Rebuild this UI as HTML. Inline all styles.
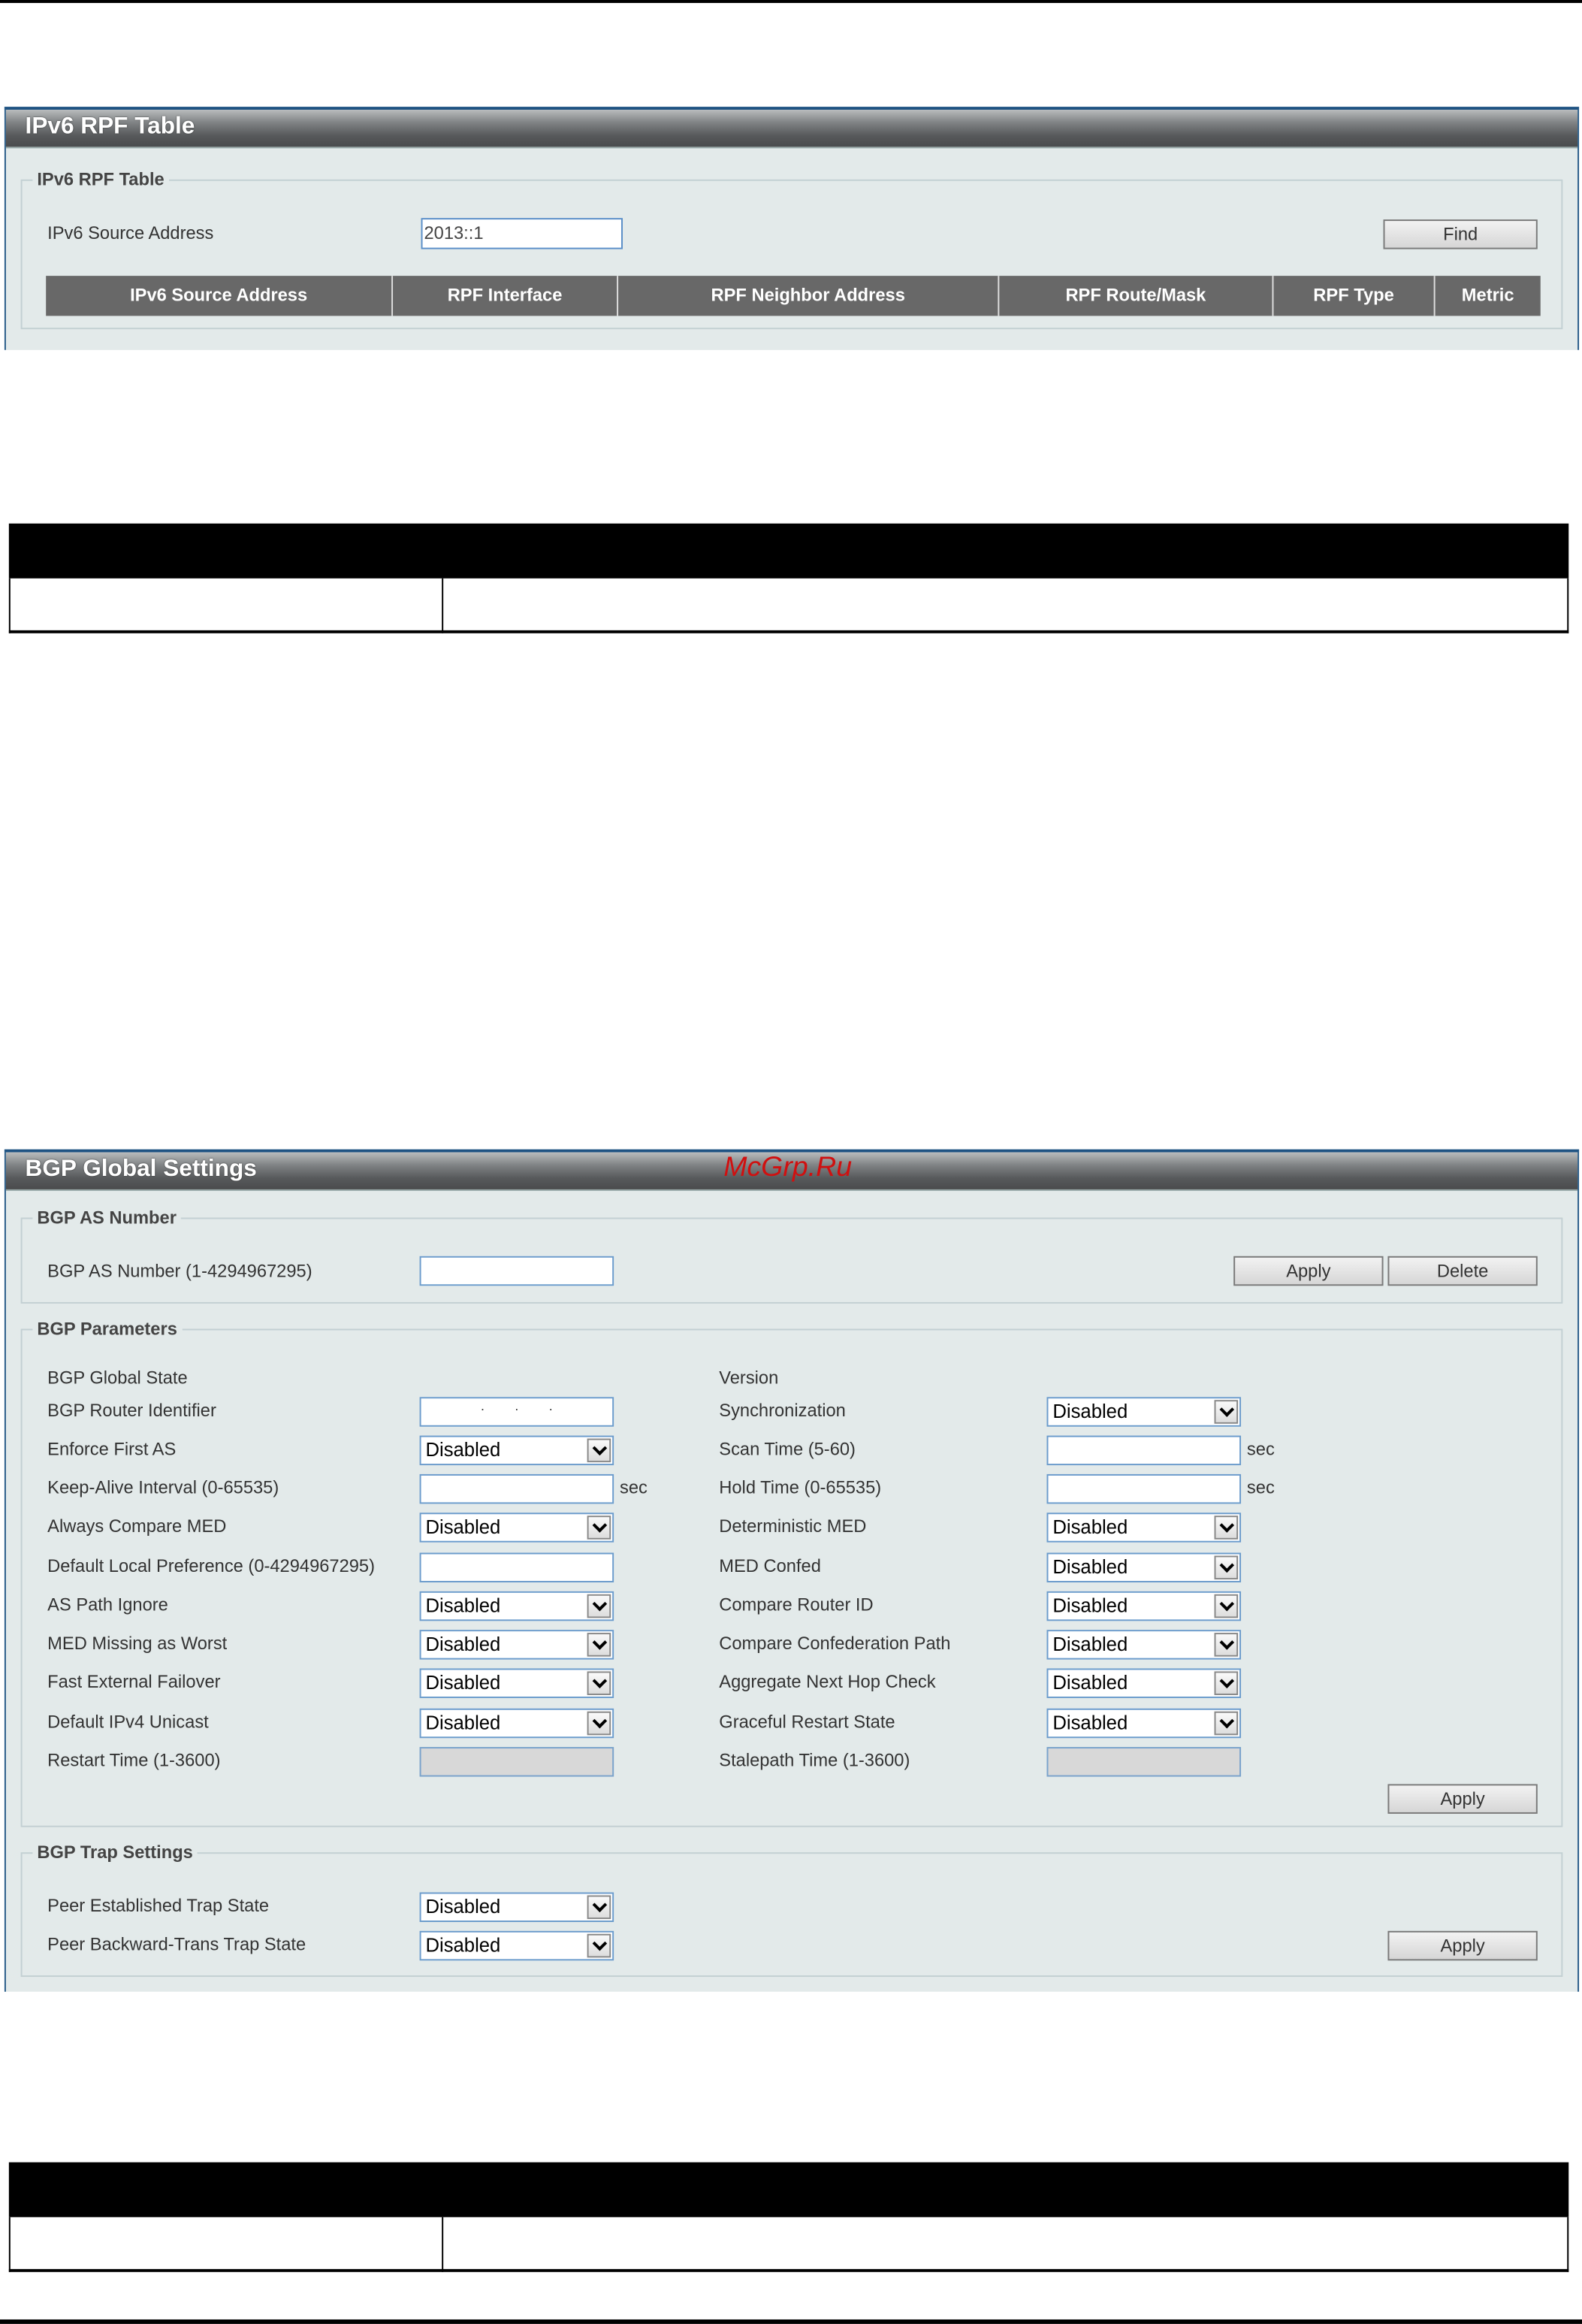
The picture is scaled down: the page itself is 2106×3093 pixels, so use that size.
<!DOCTYPE html>
<html><head><meta charset="utf-8"><style>
html,body{margin:0;padding:0;background:#fff;}
body{width:2106px;height:3093px;overflow:hidden;position:relative;}
#w{position:absolute;left:0;top:0;width:1067px;height:1567px;transform:scale(1.97376);transform-origin:0 0;font-family:"Liberation Sans",Arial,sans-serif;font-size:12px;color:#333;}
.a{position:absolute;}
.panel{position:absolute;background:#e3eaea;border-left:1px solid #2a5d8a;border-right:1px solid #2a5d8a;border-top:2px solid #1f5383;}
.tb{position:absolute;left:0;right:0;top:0;height:25px;background:linear-gradient(#b9bcbd 0%,#7f8284 35%,#57595b 70%,#4a4b4d 100%);border-bottom:1px solid #9aa;}
.tt{position:absolute;left:13px;top:3px;color:#fff;font-weight:bold;font-size:16px;text-shadow:0 0 1px #333;}
.fs{position:absolute;border:1px solid #c3d0d3;}
.lg{position:absolute;top:-8px;left:7px;background:#e3eaea;padding:0 3px;font-weight:bold;color:#444;font-size:12px;}
.in{position:absolute;width:129px;height:18px;background:#fff;border:1px solid #6c9ccc;box-sizing:border-box;width:131px;height:20px;}
.sel{position:absolute;width:131px;height:20px;box-sizing:border-box;background:#fff;border:1px solid #6c9ccc;font-size:13px;color:#000;padding-left:3px;line-height:18px;}
.sel:after{content:"";position:absolute;right:1px;top:1px;width:16px;height:16px;box-sizing:border-box;border:1px solid #888;background:linear-gradient(#fafafa,#ddd);}
.sel i{position:absolute;right:5px;top:4px;width:5px;height:5px;border-right:2px solid #000;border-bottom:2px solid #000;transform:rotate(45deg);z-index:2;}
.dis{position:absolute;width:131px;height:20px;box-sizing:border-box;background:#d8d8d8;border:1px solid #7aa3cc;}
.btn{position:absolute;height:20px;box-sizing:border-box;border:1px solid #7a7a7a;background:linear-gradient(#f2f2f2,#d6d6d6);text-align:center;line-height:18px;font-size:12px;color:#333;}
.th{position:absolute;top:0;height:27px;line-height:27px;text-align:center;color:#fff;font-weight:bold;border-right:1px solid #ddd;box-sizing:border-box;}
</style></head><body><div id="w">
<div class="a" style="left:0;top:0;width:1067px;height:2px;background:#000"></div>

<div class="panel" style="left:3px;top:72px;width:1060px;height:162px;">
 <div class="tb"><div class="tt">IPv6 RPF Table</div></div>
 <div class="fs" style="left:10px;top:47px;width:1038px;height:99px;"><div class="lg">IPv6 RPF Table</div></div>
 <div class="a" style="left:28px;top:76px;">IPv6 Source Address</div>
 <div class="in" style="left:280px;top:73px;width:136px;height:21px;border-color:#5b8fc8;color:#444;line-height:19px;padding-left:1px;">2013::1</div>
 <div class="btn" style="left:929px;top:74px;width:104px;">Find</div>
 <div class="a" style="left:27px;top:112px;width:1008px;height:27px;background:#686868;">
  <div class="th" style="left:0;width:234px">IPv6 Source Address</div>
  <div class="th" style="left:234px;width:152px">RPF Interface</div>
  <div class="th" style="left:386px;width:257px">RPF Neighbor Address</div>
  <div class="th" style="left:643px;width:185px">RPF Route/Mask</div>
  <div class="th" style="left:828px;width:109px">RPF Type</div>
  <div class="th" style="left:937px;width:71px;border:0">Metric</div>
 </div>
</div>

<div class="a" style="left:6px;top:353px;width:1052px;height:37px;background:#000"></div>
<div class="a" style="left:6px;top:390px;width:1052px;height:37px;border:1px solid #000;border-top:0;box-sizing:border-box;border-bottom:2px solid #000"></div>
<div class="a" style="left:298px;top:390px;width:1px;height:37px;background:#000"></div>

<div class="panel" style="left:3px;top:775px;width:1060px;height:566px;">
 <div class="tb"><div class="tt">BGP Global Settings</div></div>
 <div class="a" style="left:484px;top:0px;color:#d01010;font-style:italic;font-size:19px;">McGrp.Ru</div>
 <div class="fs" style="left:10px;top:44px;width:1038px;height:56px;"><div class="lg">BGP AS Number</div></div>
 <div class="a" style="left:28px;top:73px;">BGP AS Number (1-4294967295)</div>
 <div class="in" style="left:279px;top:70px;"></div>
 <div class="btn" style="left:828px;top:70px;width:101px;">Apply</div>
 <div class="btn" style="left:932px;top:70px;width:101px;">Delete</div>

 <div class="fs" style="left:10px;top:119px;width:1038px;height:334px;"><div class="lg">BGP Parameters</div></div>
 <div class="a" style="left:28px;top:145px;">BGP Global State</div>
 <div class="a" style="left:481px;top:145px;">Version</div>

 <div class="a" style="left:28px;top:167px;">BGP Router Identifier</div>
 <div class="in" style="left:279px;top:165px;text-align:center;font-size:9px;line-height:14px;letter-spacing:0;">·&nbsp;&nbsp;&nbsp;&nbsp;&nbsp;&nbsp;&nbsp;&nbsp;·&nbsp;&nbsp;&nbsp;&nbsp;&nbsp;&nbsp;&nbsp;&nbsp;·</div>
 <div class="a" style="left:481px;top:167px;">Synchronization</div>
 <div class="sel" style="left:702px;top:165px;">Disabled<i></i></div>

 <div class="a" style="left:28px;top:193px;">Enforce First AS</div>
 <div class="sel" style="left:279px;top:191px;">Disabled<i></i></div>
 <div class="a" style="left:481px;top:193px;">Scan Time (5-60)</div>
 <div class="in" style="left:702px;top:191px;"></div><div class="a" style="left:837px;top:193px;">sec</div>

 <div class="a" style="left:28px;top:219px;">Keep-Alive Interval (0-65535)</div>
 <div class="in" style="left:279px;top:217px;"></div><div class="a" style="left:414px;top:219px;">sec</div>
 <div class="a" style="left:481px;top:219px;">Hold Time (0-65535)</div>
 <div class="in" style="left:702px;top:217px;"></div><div class="a" style="left:837px;top:219px;">sec</div>

 <div class="a" style="left:28px;top:245px;">Always Compare MED</div>
 <div class="sel" style="left:279px;top:243px;">Disabled<i></i></div>
 <div class="a" style="left:481px;top:245px;">Deterministic MED</div>
 <div class="sel" style="left:702px;top:243px;">Disabled<i></i></div>

 <div class="a" style="left:28px;top:272px;">Default Local Preference (0-4294967295)</div>
 <div class="in" style="left:279px;top:270px;"></div>
 <div class="a" style="left:481px;top:272px;">MED Confed</div>
 <div class="sel" style="left:702px;top:270px;">Disabled<i></i></div>

 <div class="a" style="left:28px;top:298px;">AS Path Ignore</div>
 <div class="sel" style="left:279px;top:296px;">Disabled<i></i></div>
 <div class="a" style="left:481px;top:298px;">Compare Router ID</div>
 <div class="sel" style="left:702px;top:296px;">Disabled<i></i></div>

 <div class="a" style="left:28px;top:324px;">MED Missing as Worst</div>
 <div class="sel" style="left:279px;top:322px;">Disabled<i></i></div>
 <div class="a" style="left:481px;top:324px;">Compare Confederation Path</div>
 <div class="sel" style="left:702px;top:322px;">Disabled<i></i></div>

 <div class="a" style="left:28px;top:350px;">Fast External Failover</div>
 <div class="sel" style="left:279px;top:348px;">Disabled<i></i></div>
 <div class="a" style="left:481px;top:350px;">Aggregate Next Hop Check</div>
 <div class="sel" style="left:702px;top:348px;">Disabled<i></i></div>

 <div class="a" style="left:28px;top:377px;">Default IPv4 Unicast</div>
 <div class="sel" style="left:279px;top:375px;">Disabled<i></i></div>
 <div class="a" style="left:481px;top:377px;">Graceful Restart State</div>
 <div class="sel" style="left:702px;top:375px;">Disabled<i></i></div>

 <div class="a" style="left:28px;top:403px;">Restart Time (1-3600)</div>
 <div class="dis" style="left:279px;top:401px;"></div>
 <div class="a" style="left:481px;top:403px;">Stalepath Time (1-3600)</div>
 <div class="dis" style="left:702px;top:401px;"></div>

 <div class="btn" style="left:932px;top:426px;width:101px;">Apply</div>

 <div class="fs" style="left:10px;top:472px;width:1038px;height:82px;"><div class="lg">BGP Trap Settings</div></div>
 <div class="a" style="left:28px;top:501px;">Peer Established Trap State</div>
 <div class="sel" style="left:279px;top:499px;">Disabled<i></i></div>
 <div class="a" style="left:28px;top:527px;">Peer Backward-Trans Trap State</div>
 <div class="sel" style="left:279px;top:525px;">Disabled<i></i></div>
 <div class="btn" style="left:932px;top:525px;width:101px;">Apply</div>
</div>

<div class="a" style="left:6px;top:1458px;width:1052px;height:37px;background:#000"></div>
<div class="a" style="left:6px;top:1495px;width:1052px;height:37px;border:1px solid #000;border-top:0;box-sizing:border-box;border-bottom:2px solid #000"></div>
<div class="a" style="left:298px;top:1495px;width:1px;height:37px;background:#000"></div>

<div class="a" style="left:0;top:1564px;width:1067px;height:3px;background:#000"></div>
</div></body></html>
